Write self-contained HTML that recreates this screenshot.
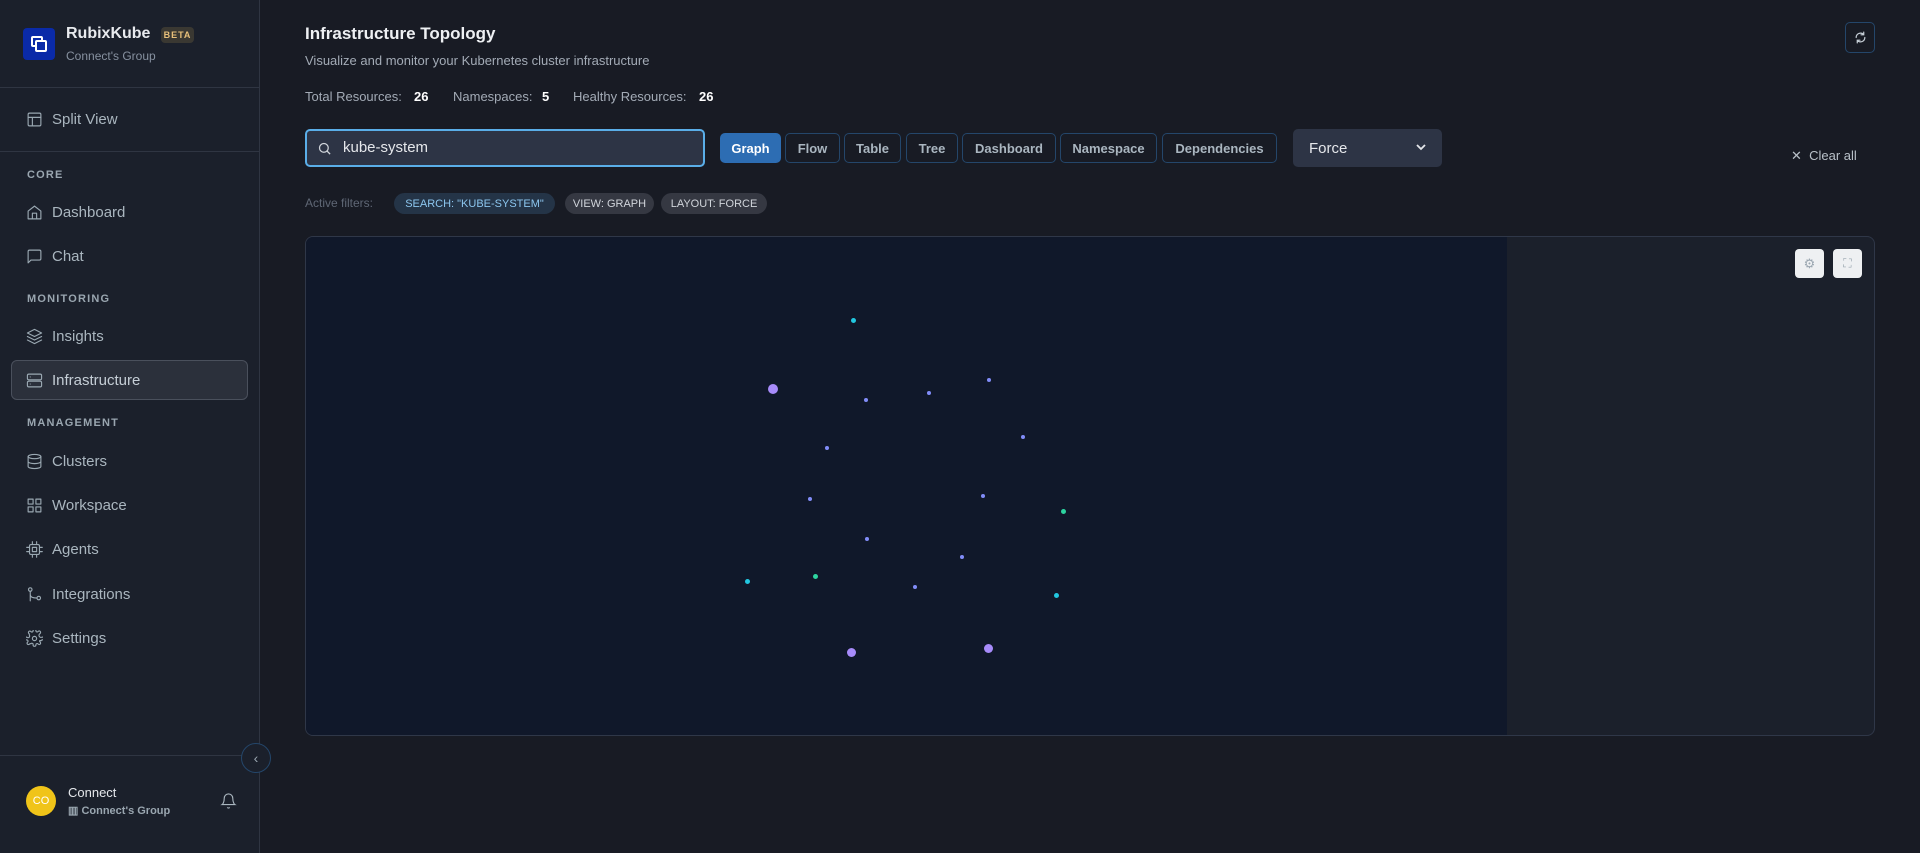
<!DOCTYPE html>
<html><head><meta charset="utf-8"><style>
*{box-sizing:border-box;margin:0;padding:0}
body{width:1920px;height:853px;background:#181b24;font-family:"Liberation Sans",sans-serif;position:relative;overflow:hidden;color:#e5e7eb}
.sb{position:absolute;left:0;top:0;width:260px;height:853px;background:#1b202b;border-right:1px solid #2f3542}
.abs{position:absolute}
.hr{position:absolute;left:0;width:259px;height:1px;background:#2f3542}
.item{position:absolute;left:26px;display:flex;align-items:center;font-size:15px;color:#aab6bf}
.item svg{width:17px;height:17px;margin-right:9px;stroke:#9aa8b2;fill:none;stroke-width:1.6;stroke-linecap:round;stroke-linejoin:round}
.sec{position:absolute;left:27px;font-size:11px;letter-spacing:1.2px;color:#9aa6b0;font-weight:bold}
.btn{position:absolute;top:133px;height:30px;border:1px solid #24466a;border-radius:5px;font-size:13px;color:#aab6c0;display:flex;align-items:center;justify-content:center;font-weight:bold}
.chip{position:absolute;top:193px;height:21px;border-radius:11px;font-size:11px;display:flex;align-items:center;justify-content:center;background:#353842;color:#d1d5db}
.dot{position:absolute;border-radius:50%}
</style></head><body>
<div class="sb">
 <div class="abs" style="left:23px;top:28px;width:32px;height:32px;background:#0a2aa8;border-radius:4px">
  <div class="abs" style="left:8px;top:8px;width:12px;height:11px;border:2.5px solid #fff;border-radius:2px"></div>
  <div class="abs" style="left:12px;top:12px;width:12px;height:12px;border:2.5px solid #fff;border-radius:2px;background:#0a2aa8"></div>
 </div>
 <div class="abs" style="left:66px;top:25px;font-size:16px;font-weight:bold;color:#e8eaee">RubixKube</div>
 <div class="abs" style="left:161px;top:27px;width:33px;height:16px;background:#3a3832;border-radius:4px;color:#e8c07a;font-size:9px;font-weight:bold;letter-spacing:1px;display:flex;align-items:center;justify-content:center">BETA</div>
 <div class="abs" style="left:66px;top:49px;font-size:12px;color:#8791a0">Connect's Group</div>
 <div class="hr" style="top:87px"></div>
 <div class="item" style="top:111px"><svg viewBox="0 0 24 24"><rect x="3" y="3" width="18" height="18" rx="2"/><path d="M3 9h18M9 9v12"/></svg>Split View</div>
 <div class="hr" style="top:151px"></div>
 <div class="sec" style="top:169px">CORE</div>
 <div class="item" style="top:204px"><svg viewBox="0 0 24 24"><path d="M3 10l9-7 9 7v11H3z"/><path d="M9 21v-8h6v8"/></svg>Dashboard</div>
 <div class="item" style="top:248px"><svg viewBox="0 0 24 24"><path d="M21 15a2 2 0 0 1-2 2H7l-4 4V5a2 2 0 0 1 2-2h14a2 2 0 0 1 2 2z"/></svg>Chat</div>
 <div class="sec" style="top:293px">MONITORING</div>
 <div class="item" style="top:328px"><svg viewBox="0 0 24 24"><path d="M12 2L2 7l10 5 10-5z"/><path d="M2 12l10 5 10-5M2 17l10 5 10-5"/></svg>Insights</div>
 <div class="abs" style="left:11px;top:360px;width:237px;height:40px;background:#2b303b;border:1px solid #4a505c;border-radius:6px"></div>
 <div class="item" style="top:372px;color:#c5ced6"><svg viewBox="0 0 24 24"><rect x="2" y="3" width="20" height="8" rx="2"/><rect x="2" y="13" width="20" height="8" rx="2"/><path d="M6 7h.01M6 17h.01"/></svg>Infrastructure</div>
 <div class="sec" style="top:417px">MANAGEMENT</div>
 <div class="item" style="top:453px"><svg viewBox="0 0 24 24"><ellipse cx="12" cy="5" rx="9" ry="3"/><path d="M3 5v14c0 1.7 4 3 9 3s9-1.3 9-3V5M3 12c0 1.7 4 3 9 3s9-1.3 9-3"/></svg>Clusters</div>
 <div class="item" style="top:497px"><svg viewBox="0 0 24 24"><rect x="3" y="3" width="7" height="7"/><rect x="14" y="3" width="7" height="7"/><rect x="3" y="14" width="7" height="7"/><rect x="14" y="14" width="7" height="7"/></svg>Workspace</div>
 <div class="item" style="top:541px"><svg viewBox="0 0 24 24"><rect x="5" y="5" width="14" height="14" rx="2"/><rect x="9" y="9" width="6" height="6"/><path d="M9 1v4M15 1v4M9 19v4M15 19v4M1 9h4M1 15h4M19 9h4M19 15h4"/></svg>Agents</div>
 <div class="item" style="top:586px"><svg viewBox="0 0 24 24"><circle cx="6" cy="5" r="2.5"/><circle cx="18" cy="17" r="2.5"/><path d="M6 7.5V21M6 12c0 3 3 5 9.5 5"/></svg>Integrations</div>
 <div class="item" style="top:630px"><svg viewBox="0 0 24 24"><circle cx="12" cy="12" r="3"/><path d="M19.4 15a1.7 1.7 0 0 0 .3 1.8l.1.1a2 2 0 1 1-2.8 2.8l-.1-.1a1.7 1.7 0 0 0-2.9 1.2V21a2 2 0 1 1-4 0v-.1A1.7 1.7 0 0 0 7 19.4a1.7 1.7 0 0 0-1.8.3l-.1.1a2 2 0 1 1-2.8-2.8l.1-.1A1.7 1.7 0 0 0 1.2 14H1a2 2 0 1 1 0-4h.1A1.7 1.7 0 0 0 4.6 7a1.7 1.7 0 0 0-.3-1.8l-.1-.1a2 2 0 1 1 2.8-2.8l.1.1A1.7 1.7 0 0 0 10 1.2V1a2 2 0 1 1 4 0v.1a1.7 1.7 0 0 0 2.9 1.2l.1-.1a2 2 0 1 1 2.8 2.8l-.1.1A1.7 1.7 0 0 0 22.8 10H23a2 2 0 1 1 0 4h-.1a1.7 1.7 0 0 0-1.5 1z"/></svg>Settings</div>
 <div class="hr" style="top:755px"></div>
 <div class="abs" style="left:26px;top:786px;width:30px;height:30px;border-radius:50%;background:#f0c419;color:#fff;font-size:11px;display:flex;align-items:center;justify-content:center">CO</div>
 <div class="abs" style="left:68px;top:785px;font-size:13px;color:#e5e7eb">Connect</div>
 <div class="abs" style="left:68px;top:804px;font-size:11px;color:#9aa6b0;font-weight:bold">▥ Connect's Group</div>
 <svg class="abs" style="left:220px;top:792px" width="17" height="18" viewBox="0 0 24 24" fill="none" stroke="#aab6bf" stroke-width="1.6"><path d="M18 8a6 6 0 0 0-12 0c0 7-3 9-3 9h18s-3-2-3-9M13.7 21a2 2 0 0 1-3.4 0"/></svg>
</div>
<div class="abs" style="left:241px;top:743px;width:30px;height:30px;border-radius:50%;border:1px solid #24466a;background:#1b202b;color:#9aa6b0;font-size:14px;display:flex;align-items:center;justify-content:center">‹</div>

<div class="abs" style="left:305px;top:24px;font-size:17px;font-weight:bold;color:#eef0f3">Infrastructure Topology</div>
<div class="abs" style="left:305px;top:53px;font-size:13px;color:#a3abb6">Visualize and monitor your Kubernetes cluster infrastructure</div>
<div class="abs" style="left:305px;top:89px;font-size:13px;color:#a3abb6">Total Resources:</div>
<div class="abs" style="left:414px;top:89px;font-size:13px;color:#fff;font-weight:bold">26</div>
<div class="abs" style="left:453px;top:89px;font-size:13px;color:#a3abb6">Namespaces:</div>
<div class="abs" style="left:542px;top:89px;font-size:13px;color:#fff;font-weight:bold">5</div>
<div class="abs" style="left:573px;top:89px;font-size:13px;color:#a3abb6">Healthy Resources:</div>
<div class="abs" style="left:699px;top:89px;font-size:13px;color:#fff;font-weight:bold">26</div>
<div class="abs" style="left:1845px;top:22px;width:30px;height:31px;border:1px solid #24466a;border-radius:5px;display:flex;align-items:center;justify-content:center"><svg width="13" height="13" viewBox="0 0 24 24" fill="none" stroke="#c5ced6" stroke-width="2.2" stroke-linecap="round"><path d="M20 12a8 8 0 0 1-14 5.3M4 12a8 8 0 0 1 14-5.3M18 2v5h-5M6 22v-5h5"/></svg></div>

<div class="abs" style="left:305px;top:129px;width:400px;height:38px;background:#2d3445;border:2px solid #5aaee8;border-radius:5px"></div>
<svg class="abs" style="left:317px;top:141px" width="15" height="15" viewBox="0 0 24 24" fill="none" stroke="#d1d5db" stroke-width="2"><circle cx="11" cy="11" r="7"/><path d="M21 21l-5-5"/></svg>
<div class="abs" style="left:343px;top:139px;font-size:15px;color:#e5e7eb">kube-system</div>
<div class="btn" style="left:720px;width:61px;background:#2d6db3;border-color:#2d6db3;color:#fff">Graph</div>
<div class="btn" style="left:785px;width:55px">Flow</div>
<div class="btn" style="left:844px;width:57px">Table</div>
<div class="btn" style="left:906px;width:52px">Tree</div>
<div class="btn" style="left:962px;width:94px">Dashboard</div>
<div class="btn" style="left:1060px;width:97px">Namespace</div>
<div class="btn" style="left:1162px;width:115px">Dependencies</div>
<div class="abs" style="left:1293px;top:129px;width:149px;height:38px;background:#2d3445;border-radius:5px;font-size:15px;color:#e5e7eb;padding:11px 16px">Force<svg style="position:absolute;right:16px;top:15px" width="10" height="7" viewBox="0 0 10 7" fill="none" stroke="#e5e7eb" stroke-width="1.8"><path d="M1 1l4 4 4-4"/></svg></div>
<div class="abs" style="left:1791px;top:148px;font-size:13px;color:#b8c0c8">✕&nbsp; Clear all</div>

<div class="abs" style="left:305px;top:196px;font-size:12px;color:#5f6775">Active filters:</div>
<div class="chip" style="left:394px;width:161px;background:#243447;color:#8cc6ef">SEARCH: "KUBE-SYSTEM"</div>
<div class="chip" style="left:565px;width:89px">VIEW: GRAPH</div>
<div class="chip" style="left:661px;width:106px">LAYOUT: FORCE</div>

<div class="abs" style="left:305px;top:236px;width:1570px;height:500px;border:1px solid #2f3748;border-radius:8px;background:#1b202b;overflow:hidden">
 <div class="abs" style="left:0;top:0;width:1201px;height:500px;background:#10182a"></div>
 <div class="abs" style="left:1489px;top:12px;width:29px;height:29px;background:#eef0f2;border-radius:4px;color:#9aa6b0;font-size:13px;display:flex;align-items:center;justify-content:center">⚙</div>
 <div class="abs" style="left:1527px;top:12px;width:29px;height:29px;background:#eef0f2;border-radius:4px;color:#9aa6b0;font-size:12px;display:flex;align-items:center;justify-content:center">⛶</div>
</div>
<div class="dot" style="left:851px;top:318px;width:5px;height:5px;background:#22c7e0"></div>
<div class="dot" style="left:768px;top:384px;width:10px;height:10px;background:#a78bfa"></div>
<div class="dot" style="left:864px;top:398px;width:4px;height:4px;background:#818cf8"></div>
<div class="dot" style="left:927px;top:391px;width:4px;height:4px;background:#818cf8"></div>
<div class="dot" style="left:987px;top:378px;width:4px;height:4px;background:#818cf8"></div>
<div class="dot" style="left:1021px;top:435px;width:4px;height:4px;background:#818cf8"></div>
<div class="dot" style="left:825px;top:446px;width:4px;height:4px;background:#818cf8"></div>
<div class="dot" style="left:808px;top:497px;width:4px;height:4px;background:#818cf8"></div>
<div class="dot" style="left:981px;top:494px;width:4px;height:4px;background:#818cf8"></div>
<div class="dot" style="left:1061px;top:509px;width:5px;height:5px;background:#2dd4a0"></div>
<div class="dot" style="left:865px;top:537px;width:4px;height:4px;background:#818cf8"></div>
<div class="dot" style="left:960px;top:555px;width:4px;height:4px;background:#818cf8"></div>
<div class="dot" style="left:745px;top:579px;width:5px;height:5px;background:#22c7e0"></div>
<div class="dot" style="left:813px;top:574px;width:5px;height:5px;background:#2dd4a0"></div>
<div class="dot" style="left:913px;top:585px;width:4px;height:4px;background:#818cf8"></div>
<div class="dot" style="left:1054px;top:593px;width:5px;height:5px;background:#22c7e0"></div>
<div class="dot" style="left:847px;top:648px;width:9px;height:9px;background:#a78bfa"></div>
<div class="dot" style="left:984px;top:644px;width:9px;height:9px;background:#a78bfa"></div>
</body></html>
